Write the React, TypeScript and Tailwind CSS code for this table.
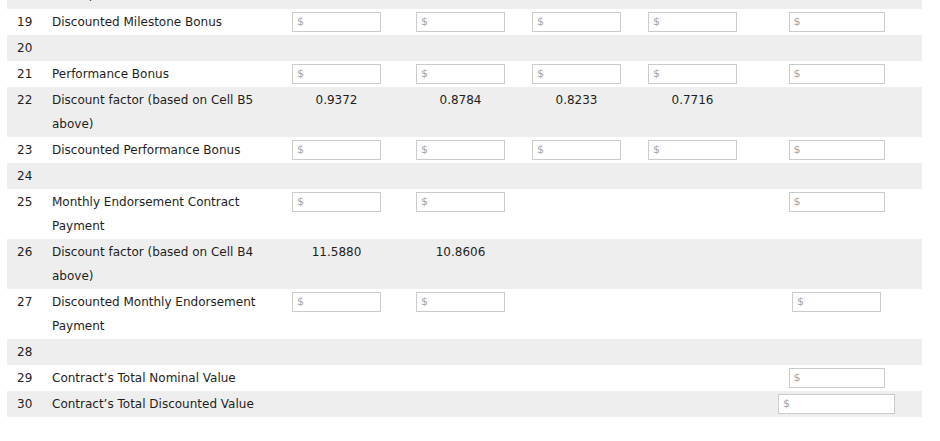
import React from "react";

type Cell = { kind: "input"; w?: number } | { kind: "num"; v: string } | { kind: "empty" };

type Row = { n: number; label: string; cells: Cell[] };

const I = (w?: number): Cell => ({ kind: "input", w });
const N = (v: string): Cell => ({ kind: "num", v });
const E: Cell = { kind: "empty" };

const rows: Row[] = [
  { n: 18, label: "Discount factor (based on Cell B3 above)", cells: [N("0.9524"), N("0.9070"), N("0.8638"), N("0.8227"), E] },
  { n: 19, label: "Discounted Milestone Bonus", cells: [I(), I(), I(), I(), I(96)] },
  { n: 20, label: "", cells: [E, E, E, E, E] },
  { n: 21, label: "Performance Bonus", cells: [I(), I(), I(), I(), I(96)] },
  { n: 22, label: "Discount factor (based on Cell B5 above)", cells: [N("0.9372"), N("0.8784"), N("0.8233"), N("0.7716"), E] },
  { n: 23, label: "Discounted Performance Bonus", cells: [I(), I(), I(), I(), I(96)] },
  { n: 24, label: "", cells: [E, E, E, E, E] },
  { n: 25, label: "Monthly Endorsement Contract Payment", cells: [I(), I(), E, E, I(96)] },
  { n: 26, label: "Discount factor (based on Cell B4 above)", cells: [N("11.5880"), N("10.8606"), E, E, E] },
  { n: 27, label: "Discounted Monthly Endorsement Payment", cells: [I(), I(), E, E, I(89)] },
  { n: 28, label: "", cells: [E, E, E, E, E] },
  { n: 29, label: "Contract\u2019s Total Nominal Value", cells: [E, E, E, E, I(96)] },
  { n: 30, label: "Contract\u2019s Total Discounted Value", cells: [E, E, E, E, I(117)] },
];

function CellView({ c, last }: { c: Cell; last: boolean }) {
  if (c.kind === "input") {
    return (
      <div className={`flex h-[24px] items-center justify-center ${last ? "pr-[3px]" : ""}`}>
        <input
          type="text"
          placeholder="$"
          style={{ width: `${c.w ?? 89}px` }}
          className="h-[20px] border border-[#cbcbcb] bg-white pl-[4px] text-[11px] text-[#333] placeholder:text-[#a3a3a3] outline-none"
        />
      </div>
    );
  }
  if (c.kind === "num") {
    return <div className="text-center">{c.v}</div>;
  }
  return <div />;
}

export default function App() {
  return (
    <div
      className="min-h-[441px] bg-white text-[12px] leading-[24px] text-[#1e1e1e]"
      style={{ fontFamily: "'DejaVu Sans', Verdana, sans-serif" }}
    >
      <div className="ml-[7px] -mt-[41px] w-[915px]">
        {rows.map((r, i) => (
          <div
            key={r.n}
            className={`grid grid-cols-[45px_222px_125px_123px_109px_123px_168px] py-[1px] ${
              i % 2 === 0 ? "bg-[#eeeeee]" : "bg-white"
            }`}
          >
            <div className="pl-[10px]">{r.n}</div>
            <div className="pr-[10px]">{r.label}</div>
            {r.cells.map((c, j) => (
              <CellView key={j} c={c} last={j === 4} />
            ))}
          </div>
        ))}
      </div>
    </div>
  );
}
